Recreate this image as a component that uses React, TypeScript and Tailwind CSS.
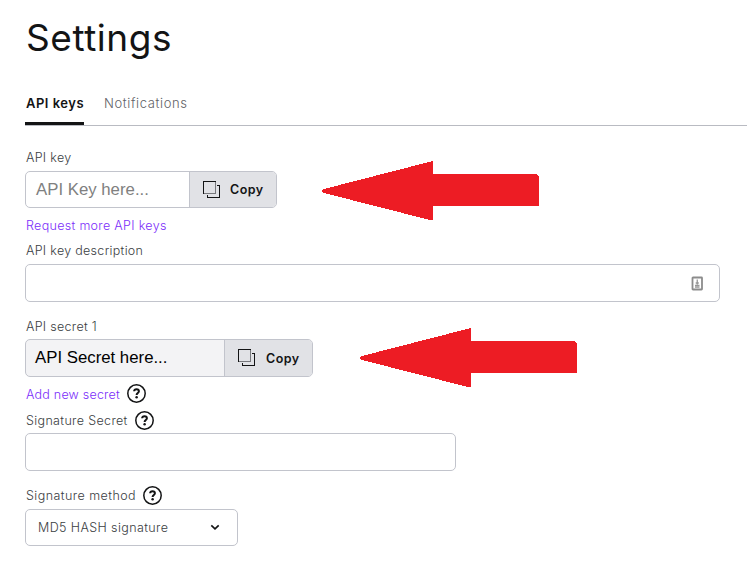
import React from "react";

const labelText = "font-light text-[12.5px] leading-[18px] text-[#3a3d42] whitespace-nowrap";

function CopyIcon() {
  return (
    <svg width="18" height="18" viewBox="0 0 18 18" fill="none" shapeRendering="crispEdges" className="shrink-0">
      <path d="M0.5 0.5H12.5V12.5H0.5Z" stroke="#131415" />
      <path d="M12.5 1V13M1 12.5H13" stroke="#77787c" />
      <path d="M14 4.5H16.5V16.5H4.5V14" stroke="#131415" />
    </svg>
  );
}

function HelpIcon() {
  return (
    <svg width="19" height="19" viewBox="0 0 19 19" fill="none" className="shrink-0">
      <circle cx="9.5" cy="9.5" r="8.7" stroke="#131415" strokeWidth="1.5" />
      <path d="M7.1 7.3C7.2 5.9 8.2 5.2 9.5 5.2c1.4 0 2.4.8 2.4 2 0 1.7-2.3 1.8-2.3 3.7" stroke="#131415" strokeWidth="2" />
      <circle cx="9.6" cy="13.2" r="1.25" fill="#131415" />
    </svg>
  );
}

function CopyButton({ width, label }: { width: string; label: string }) {
  return (
    <button className={`flex h-full ${width} shrink-0 items-center border-l border-[#c2c4cc] bg-[#e1e2e6] pl-[13px] text-[12.5px] font-semibold tracking-[0.45px] text-[#131415]`}>
      <CopyIcon />
      <span className={label}>Copy</span>
    </button>
  );
}

function Arrow({ className }: { className: string }) {
  return (
    <svg width="218" height="60" viewBox="0 0 218 60" shapeRendering="crispEdges" className={className}>
      <path d="M0 29L2 28L107 1L110 0L111 1V13H214L217 15V45H111V59H108L2 32L0 31Z" fill="#ed1c24" />
    </svg>
  );
}

export default function App() {
  return (
    <main className="relative h-[583px] w-[747px] overflow-hidden bg-white pl-[25px] pt-[14px] font-['Inter',sans-serif] text-[#131415]">
      <h1 className="ml-[1px] h-[48px] whitespace-nowrap text-[37px] leading-[48px] tracking-[0.55px]">Settings</h1>

      <nav className="mt-[32px] flex h-[32px] gap-[19px] border-b border-[#b9bbc2] text-[13px] leading-[18px]">
        <a className="h-[31px] w-[59px] whitespace-nowrap border-b-[3px] border-[#131415] pl-[1px] font-semibold tracking-[0.5px]">API keys</a>
        <a className="whitespace-nowrap pl-px font-light tracking-[0.62px] text-[#616266]">Notifications</a>
      </nav>

      <section className="mt-[23px] flex flex-col items-start">
        <label className={`${labelText} ml-[1px] h-[22px] tracking-[0.3px]`}>API key</label>
        <div className="flex h-[37px] w-[252px] items-center overflow-hidden rounded-[5px] border border-[#c2c4cc]">
          <span className="flex-1 whitespace-nowrap pl-[10px] font-['Liberation_Sans',sans-serif] text-[16.8px] text-[#808080]">API Key here...</span>
          <CopyButton width="w-[87px]" label="ml-[9px] pt-[2px]" />
        </div>
        <a className="ml-[1px] mt-[9px] h-[25px] whitespace-nowrap text-[12.5px] font-light leading-[18px] tracking-[0.32px] text-[#7b2dfa]">Request more API keys</a>
        <label className={`${labelText} ml-[1px] h-[22px] tracking-[0.3px]`}>API key description</label>
        <div className="flex h-[38px] w-[695px] items-center justify-end rounded-[5px] border border-[#c2c4cc] pr-[15px]">
          <svg width="13" height="15" viewBox="0 0 13 15" fill="none">
            <rect x="1.5" y="1.5" width="9.5" height="12" rx="0.5" stroke="#8c8c8c" strokeWidth="1.8" />
            <path d="M6.25 3.5V8.5M4.7 7H7.8M4 9.3H8.5M4 11H8.5" stroke="#969696" strokeWidth="1.3" />
          </svg>
        </div>
      </section>

      <section className="mt-[16px] flex flex-col items-start">
        <label className={`${labelText} ml-[1px] h-[21px] tracking-[0.3px]`}>API secret 1</label>
        <div className="flex h-[38px] w-[288px] items-center overflow-hidden rounded-[5px] border border-[#c2c4cc] bg-[#f3f3f5]">
          <span className="flex-1 whitespace-nowrap pl-[9px] font-['Liberation_Sans',sans-serif] text-[16.8px] text-black">API Secret here...</span>
          <CopyButton width="w-[88px]" label="ml-[10px] pt-[2px]" />
        </div>
        <div className="ml-[1px] mt-[7px] flex h-[19px] items-center gap-[7px]">
          <a className="w-[94px] whitespace-nowrap pt-[2px] text-[12.5px] font-light leading-[18px] tracking-[0.22px] text-[#7b2dfa]">Add new secret</a>
          <HelpIcon />
        </div>
        <div className="ml-[1px] mt-[8px] flex h-[19px] items-center gap-[7px]">
          <label className={`${labelText} w-[102px] tracking-[0.35px]`}>Signature Secret</label>
          <HelpIcon />
        </div>
        <div className="mt-[3px] h-[38px] w-[431px] rounded-[5px] border border-[#c2c4cc]" />
        <div className="ml-[1px] mt-[15px] flex h-[19px] items-center gap-[7px]">
          <label className={`${labelText} w-[110px] tracking-[0.45px]`}>Signature method</label>
          <HelpIcon />
        </div>
        <div className="mt-[4px] flex h-[37px] w-[213px] items-center justify-between rounded-[5px] border border-[#c2c4cc] pl-[12px] pr-[17px]">
          <span className={`${labelText} tracking-[0.4px]`}>MD5 HASH signature</span>
          <svg width="10" height="7" viewBox="0 0 10 7" fill="none">
            <path d="M1.3 1.3L5 4.8L8.7 1.3" stroke="#131415" strokeWidth="1.7" />
          </svg>
        </div>
      </section>

      <Arrow className="absolute left-[322px] top-[161px]" />
      <Arrow className="absolute left-[360px] top-[328px]" />
    </main>
  );
}
